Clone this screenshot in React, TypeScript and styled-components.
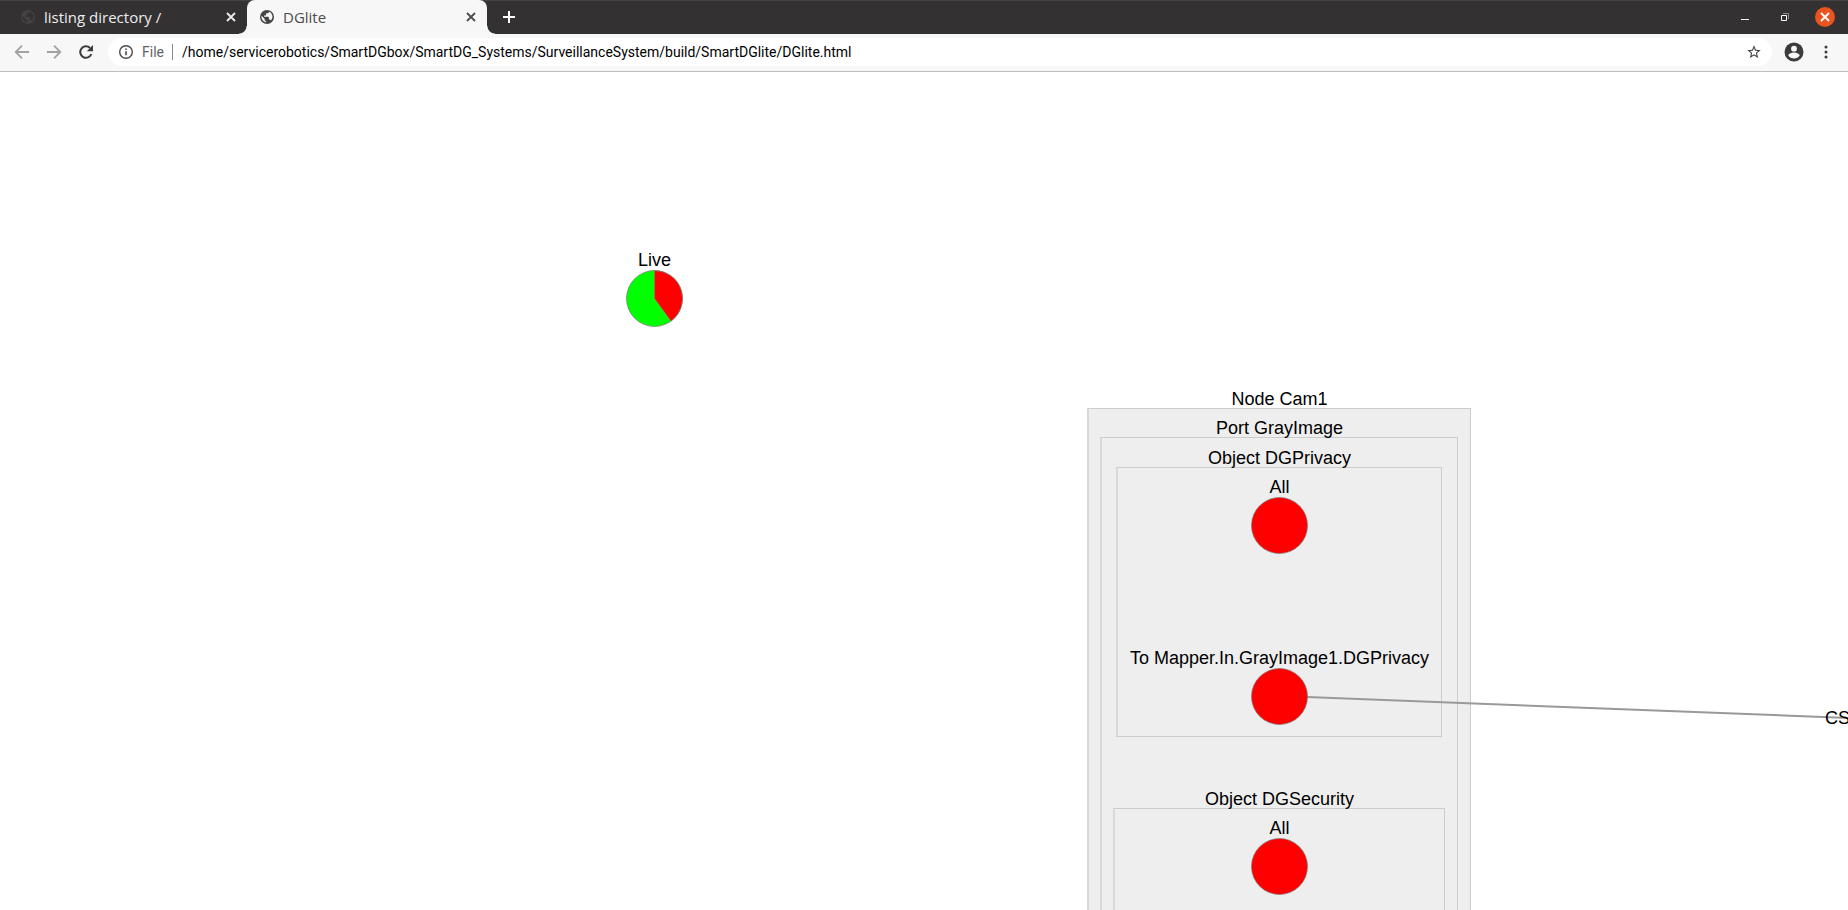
import React from "react";
import styled, { createGlobalStyle } from "styled-components";

const Global = createGlobalStyle`
  *, *::before, *::after { box-sizing: border-box; }
  body { margin: 0; background: #fff; font-family: "Open Sans", "Noto Sans", sans-serif; }
  button, input { font: inherit; border: 0; padding: 0; background: none; color: inherit; }
`;

const Browser = styled.div`
  display: flex;
  flex-direction: column;
  height: 100vh;
  min-width: 0;
  overflow: hidden;
`;

const TabStrip = styled.header`
  display: flex;
  align-items: stretch;
  height: 34px;
  flex: none;
  background: #333132;
  box-shadow: inset 0 1px #444;
`;

const Tab = styled.div<{ $active?: boolean }>`
  position: relative;
  display: flex;
  align-items: center;
  gap: 8px;
  width: ${(p) => (p.$active ? 240 : 247)}px;
  padding: 0 8px 0 ${(p) => (p.$active ? 12 : 20)}px;
  background: ${(p) => (p.$active ? "#f7f7f7" : "transparent")};
  color: ${(p) => (p.$active ? "#4c4c4c" : "#ededed")};
  border-radius: 8px 8px 0 0;
  &::before, &::after {
    content: "";
    display: ${(p) => (p.$active ? "block" : "none")};
    position: absolute;
    bottom: 0;
    width: 8px;
    height: 8px;
  }
  &::before { right: 100%; background: radial-gradient(circle at 0 0, #333132 7px, #f7f7f7 8px); }
  &::after { left: 100%; background: radial-gradient(circle at 100% 0, #333132 7px, #f7f7f7 8px); }
`;

const TabTitle = styled.span`
  flex: 1;
  font-size: 15px;
  line-height: 20px;
  white-space: nowrap;
`;

const IconButton = styled.button<{ $size?: number; $color?: string }>`
  display: flex;
  align-items: center;
  justify-content: center;
  width: ${(p) => p.$size ?? 16}px;
  height: ${(p) => p.$size ?? 16}px;
  flex: none;
  color: ${(p) => p.$color ?? "inherit"};
`;

const NewTab = styled(IconButton)`
  align-self: center;
  margin-left: 10px;
`;

const WindowControls = styled.div`
  display: flex;
  align-items: center;
  gap: 20px;
  margin-left: auto;
  padding-right: 13px;
`;

const CloseWindow = styled(IconButton)`
  border-radius: 50%;
  background: #e95420;
`;

const Toolbar = styled.nav`
  display: flex;
  align-items: center;
  height: 38px;
  flex: none;
  padding: 0 12px 1px;
  background: #f7f7f7;
  border-bottom: 1px solid #bebebe;
`;

const NavButtons = styled.div`
  display: flex;
  gap: 12px;
  margin-right: 12px;
`;

const Omnibox = styled.form`
  display: flex;
  align-items: center;
  flex: 1;
  min-width: 0;
  height: 28px;
  padding: 0 10px;
  border-radius: 14px;
  background: #fff;
  font-family: Roboto, "Open Sans", sans-serif;
  font-size: 14px;
`;

const Scheme = styled.label`
  margin-left: 8px;
  padding-right: 8px;
  line-height: 16px;
  border-right: 1px solid #8a8a8a;
  color: #5f6368;
`;

const Address = styled.input`
  flex: 1;
  min-width: 0;
  margin-left: 9px;
  color: #000;
  outline: 0;
`;

const Profile = styled.div`
  display: flex;
  align-items: center;
  gap: 12px;
  margin-left: 12px;
`;

const Canvas = styled.main`
  position: relative;
  flex: 1;
  min-height: 0;
  overflow: hidden;
  font-family: "Liberation Sans", Arial, sans-serif;
  font-size: 18px;
  line-height: 20px;
  color: #000;
`;

const Group = styled.section<{ $x: number; $y: number; $w: number; $h: number }>`
  position: absolute;
  left: ${(p) => p.$x}px;
  top: ${(p) => p.$y}px;
  width: ${(p) => p.$w}px;
  height: ${(p) => p.$h}px;
  background: #eee;
  border: 1px solid #ccc;
  border-left: 2px solid #d9d9d9;
`;

const Label = styled.span`
  position: absolute;
  left: 50%;
  bottom: 100%;
  transform: translateX(-50%);
  white-space: nowrap;
`;

const Disc = styled.div<{ $x: number; $y: number }>`
  position: absolute;
  left: ${(p) => p.$x}px;
  top: ${(p) => p.$y}px;
  width: 57px;
  height: 57px;
`;

const Pie = styled.svg`
  display: block;
  width: 100%;
  height: 100%;
`;

const Edge = styled.svg`
  position: absolute;
  left: 0;
  top: 0;
  width: 100%;
  height: 100%;
  pointer-events: none;
`;

const EdgeLabel = styled.span`
  position: absolute;
  left: 1825px;
  top: 636px;
  white-space: nowrap;
`;

const Globe = ({ color, land }: { color: string; land: string }) => (
  <svg width="16" height="16" viewBox="0 0 16 16" aria-hidden="true">
    <circle cx="8" cy="8" r="7" fill={color} />
    <path
      d="M9.900 2.500v.4c0 .8-.6 1.400-1.400 1.400H7.100v1.400c0 .4-.3.7-.7.7H5v1.400h4.200c.4 0 .7.300.7.700v2.100h.7c.6 0 1.100.4 1.300 1a5.600 5.600 0 0 0-2-9.100zM7.100 13.500v-1.300c-.8 0-1.400-.6-1.400-1.400v-.7L2.600 6.800A5.600 5.600 0 0 0 7.100 13.500z"
      fill={land}
    />
  </svg>
);

const Cross = () => (
  <svg width="14" height="14" viewBox="-7 -7 14 14" aria-hidden="true">
    <path d="M-4-4L4 4M4-4L-4 4" stroke="currentColor" strokeWidth="1.800" />
  </svg>
);

const Arrow = ({ flip }: { flip?: boolean }) => (
  <svg width="20" height="20" viewBox="-10 -10 20 20" aria-hidden="true">
    <path
      d="M7 0H-6M0-6.300L-6.300 0 0 6.300"
      transform={flip ? "scale(-1 1)" : undefined}
      fill="none"
      stroke="currentColor"
      strokeWidth="1.800"
    />
  </svg>
);

type NodeProps = { label: string; x: number; y: number; split?: boolean };

const StatusNode = ({ label, x, y, split }: NodeProps) => (
  <Disc $x={x} $y={y}>
    <Label>{label}</Label>
    <Pie viewBox="0 0 57 57" aria-hidden="true">
      <circle cx="28.500" cy="28.500" r="28" fill={split ? "#0f0" : "#f00"} />
      {split && <path d="M28.500 28.500V.5A28 28 0 0 1 45 51.200z" fill="#f00" stroke="#999" strokeWidth=".4" />}
      <circle cx="28.500" cy="28.500" r="28" fill="none" stroke="#777" strokeWidth=".7" />
    </Pie>
  </Disc>
);

export default function App() {
  return (
    <Browser>
      <Global />
      <TabStrip>
        <Tab>
          <Globe color="#444243" land="#333132" />
          <TabTitle>listing directory /</TabTitle>
          <IconButton aria-label="Close listing directory"><Cross /></IconButton>
        </Tab>
        <Tab $active>
          <Globe color="#444" land="#f7f7f7" />
          <TabTitle>DGlite</TabTitle>
          <IconButton aria-label="Close DGlite"><Cross /></IconButton>
        </Tab>
        <NewTab aria-label="New tab" $size={24} $color="#fff">
          <svg width="14" height="14" viewBox="0 0 14 14"><path d="M7 1v12M1 7h12" stroke="currentColor" strokeWidth="2" /></svg>
        </NewTab>
        <WindowControls>
          <IconButton aria-label="Minimize" $size={20} $color="#fff">
            <svg width="10" height="10" viewBox="0 0 10 10"><path d="M1 7.500h8" stroke="currentColor" /></svg>
          </IconButton>
          <IconButton aria-label="Restore" $size={20} $color="#fff">
            <svg width="10" height="10" viewBox="0 0 10 10" fill="none">
              <path d="M3 1.500h5.500V7" stroke="#8d8c8c" />
              <path d="M1.500 3.500h5v5h-5z" stroke="currentColor" />
            </svg>
          </IconButton>
          <CloseWindow aria-label="Close window" $size={20} $color="#fff"><Cross /></CloseWindow>
        </WindowControls>
      </TabStrip>
      <Toolbar>
        <NavButtons>
          <IconButton aria-label="Back" $size={20} $color="#a2a2a2"><Arrow /></IconButton>
          <IconButton aria-label="Forward" $size={20} $color="#a2a2a2"><Arrow flip /></IconButton>
          <IconButton aria-label="Reload" $size={20} $color="#3c3c3c">
            <svg width="20" height="20" viewBox="-10 -10 20 20">
              <path d="M5.300 2A5.700 5.700 0 1 1 4-4" fill="none" stroke="currentColor" strokeWidth="2" />
              <path d="M7-7v6.200H.8z" fill="currentColor" />
            </svg>
          </IconButton>
        </NavButtons>
        <Omnibox onSubmit={(e) => e.preventDefault()}>
          <IconButton type="button" aria-label="View site information" $color="#4a4a4a">
            <svg width="16" height="16" viewBox="0 0 16 16">
              <circle cx="8" cy="8" r="6.300" fill="none" stroke="currentColor" strokeWidth="1.400" />
              <path d="M8 7.200v4M8 4.500v1.500" stroke="currentColor" strokeWidth="1.600" />
            </svg>
          </IconButton>
          <Scheme htmlFor="address">File</Scheme>
          <Address
            id="address"
            spellCheck={false}
            defaultValue="/home/servicerobotics/SmartDGbox/SmartDG_Systems/SurveillanceSystem/build/SmartDGlite/DGlite.html"
          />
          <IconButton type="button" aria-label="Bookmark" $color="#3f3f3f">
            <svg width="18" height="18" viewBox="0 0 24 24">
              <path
                d="M22 9.240l-7.190-.62L12 2 9.190 8.630 2 9.240l5.460 4.730L5.820 21 12 17.270 18.180 21l-1.630-7.030L22 9.240zM12 15.400l-3.760 2.270 1-4.280-3.320-2.880 4.380-.38L12 6.100l1.710 4.040 4.380.38-3.320 2.880 1 4.280L12 15.400z"
                fill="currentColor"
              />
            </svg>
          </IconButton>
        </Omnibox>
        <Profile>
          <IconButton aria-label="Profile" $size={20} $color="#3c3c3c">
            <svg width="20" height="20" viewBox="0 0 20 20">
              <circle cx="10" cy="10" r="9.500" fill="currentColor" />
              <circle cx="10" cy="6.700" r="2.900" fill="#f7f7f7" />
              <path d="M4.300 13.500c.1-1.900 3.800-2.900 5.700-2.900s5.600 1 5.700 2.900A6.800 6.800 0 0 1 10 16.500a6.800 6.800 0 0 1-5.700-3z" fill="#f7f7f7" />
            </svg>
          </IconButton>
          <IconButton aria-label="Menu" $size={20} $color="#3c3c3c">
            <svg width="4" height="14" viewBox="0 0 4 14" fill="currentColor">
              <circle cx="2" cy="2" r="1.500" />
              <circle cx="2" cy="7" r="1.500" />
              <circle cx="2" cy="12" r="1.500" />
            </svg>
          </IconButton>
        </Profile>
      </Toolbar>
      <Canvas>
        <StatusNode label="Live" x={626} y={198} split />
        <Group $x={1087} $y={336} $w={384} $h={900}>
          <Label>Node Cam1</Label>
        </Group>
        <Group $x={1100} $y={365} $w={358} $h={860}>
          <Label>Port GrayImage</Label>
        </Group>
        <Group $x={1116} $y={395} $w={326} $h={270}>
          <Label>Object DGPrivacy</Label>
        </Group>
        <Group $x={1113} $y={736} $w={332} $h={400}>
          <Label>Object DGSecurity</Label>
        </Group>
        <Edge aria-hidden="true">
          <path d="M1307 625L1848 646" stroke="#999" strokeWidth="2" />
        </Edge>
        <StatusNode label="All" x={1251} y={425} />
        <StatusNode label="To Mapper.In.GrayImage1.DGPrivacy" x={1251} y={596} />
        <StatusNode label="All" x={1251} y={766} />
        <EdgeLabel>CS</EdgeLabel>
      </Canvas>
    </Browser>
  );
}
